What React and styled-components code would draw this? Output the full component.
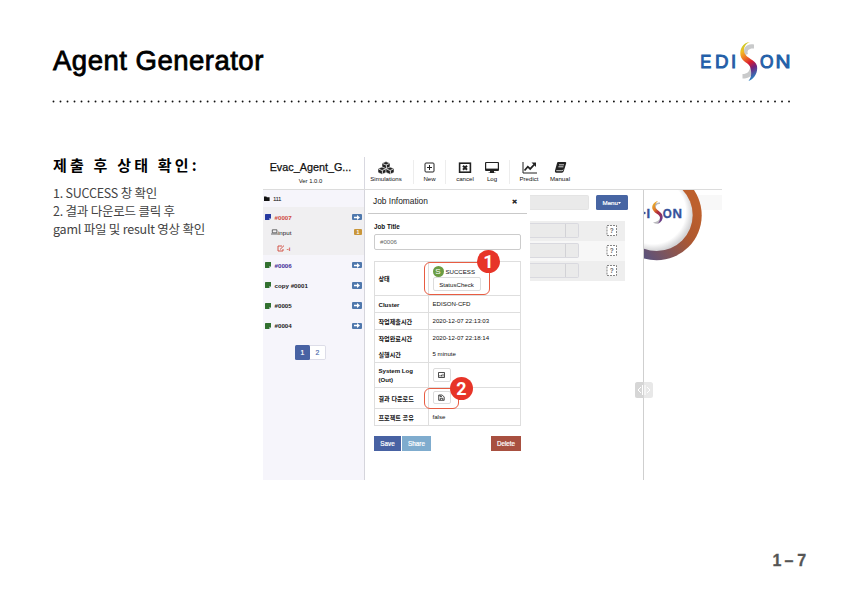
import React from "react";
import styled, { createGlobalStyle, css } from "styled-components";

const Global = createGlobalStyle`
  * { box-sizing: border-box; }
  body { margin: 0; background: #fff; }
`;

const sans = `"Liberation Sans", "Noto Sans CJK KR", sans-serif`;
const korean = `"Noto Sans CJK KR", sans-serif`;

const Page = styled.main`
  width: 843px;
  height: 596px;
  overflow: hidden;
  display: flex;
  flex-direction: column;
  background: #fff;
  font-family: ${sans};
  color: #111;
  white-space: nowrap;
`;
const Header = styled.header`
  display: flex;
  justify-content: space-between;
  height: 100px;
  padding: 40px 52px 0 53px;
`;
const PageTitle = styled.h1`
  margin: 5px 0 0;
  font-size: 27.5px;
  line-height: 32px;
  font-weight: 400;
  letter-spacing: 0.5px;
  color: #000;
  -webkit-text-stroke: 0.8px #000;
`;
const Dots = styled.svg`
  display: block;
  flex: none;
  width: 843px;
  height: 3px;
`;
const Body = styled.div`
  display: flex;
  height: 377px;
  padding-top: 54px;
`;
const Notes = styled.section`
  flex: none;
  width: 263px;
  padding-left: 53px;
  font-family: ${korean};
`;
const NotesTitle = styled.h2`
  margin: -4px 0 7px;
  font-size: 15px;
  line-height: 24px;
  font-weight: 700;
  letter-spacing: 3.2px;
  color: #000;
`;
const NotesLine = styled.p`
  margin: 0;
  font-size: 12.5px;
  line-height: 18px;
  letter-spacing: -0.22px;
  color: #444;
`;
const PageNumber = styled.footer`
  display: flex;
  gap: 3px;
  padding: 72px 0 0 772.5px;
  font-size: 16px;
  line-height: 18px;
  font-weight: 700;
  color: #555;
  -webkit-text-stroke: 0.3px #555;
  span:last-child { margin-left: 1px; }
`;

const Shot = styled.section`
  flex: none;
  width: 459px;
  height: 323px;
  display: flex;
  flex-direction: column;
`;
const Toolbar = styled.div`
  display: flex;
  height: 33px;
  border-bottom: 1px solid #dcdcdc;
`;
const AppName = styled.div`
  width: 102px;
  padding-top: 4px;
  border-right: 1px solid #d8d8e0;
  display: flex;
  flex-direction: column;
  align-items: center;
  padding-right: 6px;
`;
const AppTitle = styled.div`
  font-size: 10.8px;
  line-height: 13px;
  color: #111;
  -webkit-text-stroke: 0.25px #111;
`;
const Version = styled.div`
  font-size: 5.9px;
  line-height: 8px;
  margin-top: 3px;
`;
const Tool = styled.div`
  width: ${(p) => p.$w}px;
  display: flex;
  flex-direction: column;
  align-items: center;
  padding-top: 4px;
  font-size: 6.1px;
  line-height: 8px;
  svg { display: block; height: 14px; }
`;
const Divider = styled.span`
  width: 1px;
  height: 24px;
  margin-top: 3px;
  background: #ededed;
`;
const Workspace = styled.div`
  flex: 1;
  display: flex;
`;
const Sidebar = styled.aside`
  width: 102px;
  height: 290px;
  background: #f6f5fb;
  border-right: 1px solid #d5d5dc;
  font-size: 6.2px;
  font-weight: 700;
`;
const Folder = styled.div`
  display: flex;
  align-items: center;
  gap: 3px;
  height: 16px;
  padding-left: 1px;
  font-weight: 400;
  letter-spacing: -0.5px;
  margin-bottom: 1px;
`;
const ActiveJob = styled.div`
  height: 48px;
  background: #f0eff1;
`;
const JobRow = styled.div`
  display: flex;
  align-items: center;
  height: ${(p) => p.$h || 20.25}px;
  padding: 0 2px 0 ${(p) => p.$indent || 2}px;
  gap: ${(p) => (p.$indent ? 0 : 3.5)}px;
  color: ${(p) => p.$color || "#222"};
  font-weight: ${(p) => (p.$light ? 400 : 700)};
`;
const Tag = styled.span`
  margin-left: auto;
  width: ${(p) => (p.$amber ? 8 : 10)}px;
  height: 6.5px;
  border-radius: 1px;
  background: ${(p) => (p.$amber ? "#c9963a" : "#4f78ad")};
  color: #fff;
  display: flex;
  align-items: center;
  justify-content: center;
  font-size: 5px;
  font-weight: 700;
`;
const Pager = styled.div`
  display: flex;
  width: 31px;
  height: 15px;
  margin: 9px 0 0 32px;
  border: 1px solid #dddde8;
  border-radius: 2px;
  background: #fff;
  font-weight: 400;
  font-size: 6.8px;
`;
const PageButton = styled.span`
  flex: 1;
  display: flex;
  align-items: center;
  justify-content: center;
  ${(p) => p.$on && css`margin: -1px 0 -1px -1px;`}
  border-radius: 1.5px;
  color: ${(p) => (p.$on ? "#fff" : "#5472b0")};
  -webkit-text-stroke: 0.2px;
  background: ${(p) => (p.$on ? "#4862a3" : "#fff")};
`;

const Dialog = styled.section`
  width: 165px;
  background: #fff;
`;
const DialogHead = styled.div`
  display: flex;
  justify-content: space-between;
  align-items: center;
  height: 24px;
  margin: 0 3px;
  padding: 0 10px 1px 5px;
  border-bottom: 1px solid #c9c9c9;
  font-size: 8.4px;
  color: #222;
  b { font-size: 8px; -webkit-text-stroke: 0.4px #111; }
`;
const DialogBody = styled.div`
  padding: 9px 9px 0;
  font-size: 6.1px;
`;
const FieldLabel = styled.div`
  font-weight: 700;
  font-size: 6.3px;
  line-height: 8px;
  margin-bottom: 3px;
`;
const Field = styled.div`
  height: 16px;
  border: 1px solid #ccc;
  border-radius: 2px;
  padding-left: 5px;
  line-height: 14px;
  color: #666;
`;
const Table = styled.div`
  margin-top: 11px;
  width: 147px;
  border: 1px solid #dedede;
  border-bottom: 0;
`;
const Row = styled.div`
  display: flex;
  height: ${(p) => p.$h}px;
  border-bottom: ${(p) => (p.$open ? "0" : "1px solid #dedede")};
`;
const Key = styled.div`
  width: 54px;
  padding: 0 0 0 3.5px;
  border-right: 1px solid #dedede;
  display: flex;
  align-items: center;
  line-height: 9px;
  font-weight: 700;
  font-size: 6.1px;
`;
const Value = styled.div`
  position: relative;
  flex: 1;
  padding: 0 0 1px 3.5px;
  display: flex;
  flex-direction: column;
  justify-content: center;
  align-items: flex-start;
`;
const Status = styled.div`
  display: flex;
  align-items: center;
  gap: 2px;
  height: 12px;
`;
const StatusIcon = styled.span`
  width: 11px;
  height: 11px;
  border-radius: 50%;
  background: #6b9c42;
  color: #fff;
  display: flex;
  align-items: center;
  justify-content: center;
  font-size: 8px;
`;
const SmallButton = styled.span`
  width: ${(p) => p.$w}px;
  height: ${(p) => p.$h || 14}px;
  border: 1px solid #dcdcdc;
  border-radius: 2px;
  display: flex;
  align-items: center;
  justify-content: center;
`;
const Callout = styled.span`
  position: absolute;
  left: ${(p) => p.$x}px;
  top: ${(p) => p.$y}px;
  width: ${(p) => p.$w}px;
  height: ${(p) => p.$h}px;
  border: 1.4px solid #e85c42;
  border-radius: 6px;
`;
const Badge = styled.span`
  position: absolute;
  z-index: 2;
  left: ${(p) => p.$x}px;
  top: ${(p) => p.$y}px;
  width: 23px;
  height: 23px;
  border-radius: 50%;
  background: #e73428;
  color: #fff;
  display: flex;
  align-items: center;
  justify-content: center;
  font-family: Roboto, sans-serif;
  font-size: 18px;
  font-weight: 700;
`;
const Actions = styled.div`
  display: flex;
  gap: 1px;
  margin-top: 10px;
  width: 147px;
`;
const Action = styled.span`
  width: ${(p) => p.$w}px;
  height: 15px;
  background: ${(p) => p.$bg};
  color: #fff;
  font-size: 6.3px;
  -webkit-text-stroke: 0.2px #fff;
  display: flex;
  align-items: center;
  justify-content: center;
  ${(p) => p.$end && css`margin-left: auto;`}
`;

const Ports = styled.section`
  width: 113px;
`;
const SearchRow = styled.div`
  display: flex;
  justify-content: space-between;
  padding: 5px 15px 0 0;
  height: 31px;
`;
const SearchField = styled.span`
  width: 59px;
  height: 15px;
  border: 1px solid #e4e4e4;
  border-left: 0;
  border-radius: 0 2px 2px 0;
  background: #eaeaea;
`;
const MenuButton = styled.span`
  width: 32px;
  height: 15px;
  border-radius: 1.5px;
  background: #4765a3;
  color: #fff;
  font-size: 6.2px;
  -webkit-text-stroke: 0.2px #fff;
  display: flex;
  align-items: center;
  justify-content: center;
  svg { margin-left: 0.5px; }
`;
const PortRow = styled.div`
  width: 95px;
  height: 20px;
  display: flex;
  align-items: center;
  justify-content: space-between;
  padding: 0 8px 1px 0;
  background: ${(p) => (p.$alt ? "#f7f7f7" : "#eeeeee")};
`;
const PortField = styled.span`
  width: 49px;
  height: 15px;
  border: 1px solid #d9d9df;
  border-left: 0;
  border-radius: 0 2px 2px 0;
  background: #eaeaea;
  display: flex;
  justify-content: flex-end;
  &::after {
    content: "";
    width: 12px;
    border-left: 1px solid #d2d2d6;
  }
`;
const Viewer = styled.section`
  position: relative;
  width: 79px;
  height: 290px;
  border-left: 1px solid #cfcfcf;
`;
const Strip = styled.div`
  height: 15px;
  margin-top: 5px;
  background: #f8f8f8;
`;
const Seal = styled.svg`
  position: absolute;
  left: 0;
  top: 0;
`;
const Handle = styled.svg`
  position: absolute;
  left: -9px;
  top: 192px;
`;

const Logo = () => (
  <svg width="91" height="42" viewBox="0 0 91 42">
    <defs>
      <linearGradient id="swoosh" x1="0.2" y1="0" x2="0.5" y2="1">
        <stop offset="0" stopColor="#b9cf2b" />
        <stop offset=".2" stopColor="#f2bd22" />
        <stop offset=".42" stopColor="#ec6a24" />
        <stop offset=".58" stopColor="#d91e30" />
        <stop offset=".75" stopColor="#73217b" />
        <stop offset="1" stopColor="#2a7fc0" />
      </linearGradient>
    </defs>
    <g fill="#235fa8" stroke="#235fa8" strokeWidth="1" fontFamily="Liberation Sans, sans-serif" fontSize="18.6">
      <text x="0.2" y="27.600" textLength="11" lengthAdjust="spacingAndGlyphs">E</text>
      <text x="15" y="27.600" textLength="13.500" lengthAdjust="spacingAndGlyphs">D</text>
      <text x="31" y="27.600">I</text>
      <text x="60" y="27.600" textLength="13.500" lengthAdjust="spacingAndGlyphs">O</text>
      <text x="75.500" y="27.600" textLength="15" lengthAdjust="spacingAndGlyphs">N</text>
    </g>
    <path d="M54 4.500C46 3 42 9 45 15L48 14C46.500 10.500 49 8 54 8.500zM53 27C54 36 49 38.500 42.500 38.500V34C47 34 50 32 50.500 25z" fill="#c9cacb" />
    <path d="M50 2C42.500 3 39.500 9 40.500 15.500C42 22.500 49 22 50.500 28C52 34 51 38 48.500 41C55 38.500 58 32 57 26C55.500 19.500 46.500 18.500 44.500 13C43 8 45 4 50 2Z" fill="url(#swoosh)" />
  </svg>
);

const SimulationIcon = () => (
  <svg width="16" height="14" viewBox="0 0 16 14" fill="#222" stroke="#fff" strokeWidth=".5">
    {[[8, 0.6], [4, 6.1], [12, 6.1]].map(([x, y]) => (
      <g key={x}>
        <path d={`M${x} ${y}l4 1.6v3.7l-4 1.900l-4-1.900v-3.700z`} />
        <path d={`M${x - 3.4} ${y + 1.9}l3.400 1.500l3.400-1.500M${x + 0.4} ${y + 3.5}v3.200`} fill="none" strokeWidth=".8" />
      </g>
    ))}
  </svg>
);
const NewIcon = () => (
  <svg width="11" height="14" viewBox="0 0 11 14" fill="none" stroke="#222">
    <rect x="1" y="2" width="9" height="9" rx="1" />
    <path d="M5.500 4v5M3 6.500h5" />
  </svg>
);
const CancelIcon = () => (
  <svg width="14" height="14" viewBox="0 0 14 14" fill="none" stroke="#222">
    <rect x="1.600" y="2.200" width="10.800" height="9" strokeWidth="1.600" />
    <path d="M5 4.800l4 4M9 4.800l-4 4" strokeWidth="2" />
  </svg>
);
const MonitorIcon = () => (
  <svg width="14" height="14" viewBox="0 0 14 14" fill="#222">
    <path d="M1 1h12q1 0 1 1v7q0 1-1 1H9v1.400h1.500V12h-7v-.6H5V10H1q-1 0-1-1V2q0-1 1-1z" />
    <path d="M1.200 2h11.600v5.600H1.200z" fill="#fff" />
  </svg>
);
const ChartIcon = () => (
  <svg width="15" height="14" viewBox="0 0 15 14" fill="none" stroke="#222">
    <path d="M1 1v11h14" />
    <path d="M2.500 9.500l3.300-3.800l2.400 2.200l4.100-4.400" strokeWidth="1.800" />
    <path d="M9.500 1.500h4.500v4.500z" fill="#222" stroke="none" />
  </svg>
);
const BookIcon = () => (
  <svg width="13" height="14" viewBox="0 0 13 14">
    <path d="M4 1h7.500q1 .4.700 1.200L9.800 10q-.4 1.800-2 1.800H2Q.4 11.400 1 9.500L3 2.200Q3.300 1 4 1z" fill="#222" />
    <path d="M5 3.800h5M4.400 5.800h5M2.300 9.700h5.600q1 0 1.300-1" stroke="#fff" strokeWidth=".8" fill="none" />
  </svg>
);
const FolderIcon = () => (
  <svg width="6" height="5" viewBox="0 0 6 5" fill="#111"><path d="M0 .4h2.300l.6.8H5.600V5H0z" /></svg>
);
const NoteIcon = ({ color }) => (
  <svg width="6" height="6" viewBox="0 0 6 6">
    <path d="M.6 0H6v4.300L4.300 6H.6Q0 6 0 5.400V.6Q0 0 .6 0z" fill={color} />
    <path d="M4.300 6V4.300H6z" fill="#d8e1ee" />
  </svg>
);
const LaptopIcon = () => (
  <svg width="7" height="6" viewBox="0 0 7 6" fill="none" stroke="#333" strokeWidth=".7"><path d="M1.300.8h4.600v3H1.300zM0 5h7" /></svg>
);
const EditIcon = () => (
  <svg width="8" height="7" viewBox="0 0 8 7" fill="none" stroke="#cf4538" strokeWidth=".9"><path d="M5 1H1v5h5V4M3 4.500L7 .6" /></svg>
);
const ArrowIcon = () => (
  <svg width="6" height="5" viewBox="0 0 6 5"><path d="M0 1.800h3V0L6 2.500L3 5V3.200H0z" fill="#fff" /></svg>
);
const CaretIcon = () => (
  <svg width="3" height="2" viewBox="0 0 3 2"><path d="M0 0h3L1.500 2z" fill="#fff" /></svg>
);
const LogImageIcon = () => (
  <svg width="7" height="6" viewBox="0 0 7 6" stroke="#222" strokeWidth=".8" fill="none"><path d="M.5.5h6v5h-6zM2 4.500V3M3.500 4.500V2.800M5 4.500V1.800" /></svg>
);
const SaveIcon = () => (
  <svg width="7" height="7" viewBox="0 0 7 7" stroke="#222" strokeWidth=".8" fill="none"><path d="M.7 1h3.500l2 2v3.300H.7zM2 1v1.600h2M2.300 6V4.300h2.500V6" /></svg>
);
const UnknownIcon = () => (
  <svg width="11" height="11" viewBox="0 0 11 11">
    <rect x="1" y=".5" width="9.500" height="10" fill="#fff" stroke="#666" strokeWidth=".8" strokeDasharray="2 1" />
    <text x="3.800" y="8" fontSize="6.500" fontWeight="700" fontFamily="Liberation Sans, sans-serif" fill="#666">?</text>
  </svg>
);

const SealLogo = () => (
  <Seal width="78" height="75" viewBox="644 190 78 75">
    <defs>
      <linearGradient id="ring" x1="0.4" y1="1" x2="1" y2=".5">
        <stop offset="0" stopColor="#5c527b" />
        <stop offset=".65" stopColor="#ae5830" />
        <stop offset="1" stopColor="#bd602d" />
      </linearGradient>
      <radialGradient id="disc" cx=".45" cy=".45" r=".55">
        <stop offset=".82" stopColor="#fff" />
        <stop offset="1" stopColor="#d4d4d6" />
      </radialGradient>
      <linearGradient id="mark" x1="0" y1="0" x2=".5" y2="1">
        <stop offset="0" stopColor="#edc32b" />
        <stop offset=".4" stopColor="#e07a2a" />
        <stop offset=".6" stopColor="#b42b38" />
        <stop offset="1" stopColor="#6a3989" />
      </linearGradient>
    </defs>
    <circle cx="656.700" cy="215.200" r="45" fill="url(#ring)" />
    <circle cx="656.700" cy="215" r="36" fill="url(#disc)" />
    <path d="M660 202.500C655 202 652 206 654 210C656 214 661 214 660 218C659 221 656 222 653 222.500C659 226 664 221 662 215C660 211 655 210 656 206Q657 203.500 660 204z" fill="#b8b8bc" />
    <path d="M658 201C653 202 651 207 653 210C655 214 660 214 660 218Q660 222 657 224C663 222 664 216 661 213C658 210 655 209 655 206Q655 203 658 201z" fill="url(#mark)" />
    <g fill="#35529b" stroke="#35529b" strokeWidth=".3" fontFamily="Liberation Sans, sans-serif" fontSize="13" fontWeight="700">
      <rect x="644" y="212" width="1.300" height="2" />
      <text x="646.500" y="218">I</text>
      <text x="662.800" y="218" textLength="9" lengthAdjust="spacingAndGlyphs">O</text>
      <text x="672.500" y="218" textLength="9.500" lengthAdjust="spacingAndGlyphs">N</text>
    </g>
  </Seal>
);

const jobs = [
  { name: "#0006", color: "#3f2b96" },
  { name: "copy #0001" },
  { name: "#0005" },
  { name: "#0004" },
];

export default function App() {
  return (
    <Page>
      <Global />
      <Header>
        <PageTitle>Agent Generator</PageTitle>
        <Logo />
      </Header>
      <Dots viewBox="0 0 843 3">
        <path d="M53.500 1.500H790" stroke="#111" strokeWidth="1.900" strokeLinecap="round" strokeDasharray="0 7.005" />
      </Dots>
      <Body>
        <Notes>
          <NotesTitle>제출 후 상태 확인:</NotesTitle>
          <NotesLine>1. SUCCESS 창 확인</NotesLine>
          <NotesLine>2. 결과 다운로드 클릭 후</NotesLine>
          <NotesLine>gaml 파일 및 result 영상 확인</NotesLine>
        </Notes>
        <Shot>
          <Toolbar>
            <AppName>
              <AppTitle>Evac_Agent_G...</AppTitle>
              <Version>Ver 1.0.0</Version>
            </AppName>
            <Tool $w={42}><SimulationIcon />Simulations</Tool>
            <Tool $w={6} />
            <Divider />
            <Tool $w={31}><NewIcon />New</Tool>
            <Divider />
            <Tool $w={38}><CancelIcon />cancel</Tool>
            <Tool $w={16}><MonitorIcon />Log</Tool>
            <Tool $w={9} />
            <Divider />
            <Tool $w={38}><ChartIcon />Predict</Tool>
            <Tool $w={24}><BookIcon />Manual</Tool>
          </Toolbar>
          <Workspace>
            <Sidebar>
              <Folder><FolderIcon />111</Folder>
              <ActiveJob>
                <JobRow $h={20} $color="#cf4a3f"><NoteIcon color="#273aa0" />#0007<Tag><ArrowIcon /></Tag></JobRow>
                <JobRow $h={10} $indent={8} $light><LaptopIcon />input<Tag $amber>1</Tag></JobRow>
                <JobRow $h={22} $indent={14} $color="#cf4a3f"><EditIcon />&nbsp;-i</JobRow>
              </ActiveJob>
              {jobs.map((job) => (
                <JobRow key={job.name} $color={job.color}>
                  <NoteIcon color="#32702f" />{job.name}<Tag><ArrowIcon /></Tag>
                </JobRow>
              ))}
              <Pager><PageButton $on>1</PageButton><PageButton>2</PageButton></Pager>
            </Sidebar>
            <Dialog>
              <DialogHead>Job Infomation<b>×</b></DialogHead>
              <DialogBody>
                <FieldLabel>Job Title</FieldLabel>
                <Field>#0006</Field>
                <Table>
                  <Row $h={34}>
                    <Key>상태</Key>
                    <Value>
                      <Status><StatusIcon>S</StatusIcon>SUCCESS</Status>
                      <SmallButton $w={48}>StatusCheck</SmallButton>
                      <Callout $x={-5} $y={0} $w={66} $h={33} />
                      <Badge $x={48} $y={-12}>1</Badge>
                    </Value>
                  </Row>
                  <Row $h={17}><Key>Cluster</Key><Value>EDISON-CFD</Value></Row>
                  <Row $h={17}><Key>작업제출시간</Key><Value>2020-12-07 22:13:03</Value></Row>
                  <Row $h={16} $open><Key>작업완료시간</Key><Value>2020-12-07 22:18:14</Value></Row>
                  <Row $h={17}><Key>실행시간</Key><Value>5 minute</Value></Row>
                  <Row $h={25}><Key>System Log<br />(Out)</Key><Value><SmallButton $w={18}><LogImageIcon /></SmallButton></Value></Row>
                  <Row $h={21}>
                    <Key>결과 다운로드</Key>
                    <Value>
                      <SmallButton $w={18} $h={13}><SaveIcon /></SmallButton>
                      <Callout $x={-5} $y={0} $w={35} $h={21} />
                      <Badge $x={21} $y={-11}>2</Badge>
                    </Value>
                  </Row>
                  <Row $h={17}><Key>프로젝트 공유</Key><Value>false</Value></Row>
                </Table>
                <Actions>
                  <Action $w={27} $bg="#4862a3">Save</Action>
                  <Action $w={29} $bg="#7facce">Share</Action>
                  <Action $w={30} $bg="#a85040" $end>Delete</Action>
                </Actions>
              </DialogBody>
            </Dialog>
            <Ports>
              <SearchRow><SearchField /><MenuButton>Menu<CaretIcon /></MenuButton></SearchRow>
              {[0, 1, 2].map((i) => (
                <PortRow key={i} $alt={i === 1}><PortField /><UnknownIcon /></PortRow>
              ))}
            </Ports>
            <Viewer>
              <Strip />
              <SealLogo />
              <Handle width="18" height="16" viewBox="0 0 18 16">
                <rect width="18" height="16" rx="2.500" fill="#e8e8e8" />
                <path d="M0 2.500Q0 0 2.500 0H9v16H2.500Q0 16 0 13.500z" fill="#d6d6d6" />
                <path d="M6 5L3 8l3 3M12 5l3 3l-3 3" stroke="#fff" fill="none" />
                <path d="M7.500 3v10M10 3v10" stroke="#fff" />
              </Handle>
            </Viewer>
          </Workspace>
        </Shot>
      </Body>
      <PageNumber><span>1</span><span>–</span><span>7</span></PageNumber>
    </Page>
  );
}
